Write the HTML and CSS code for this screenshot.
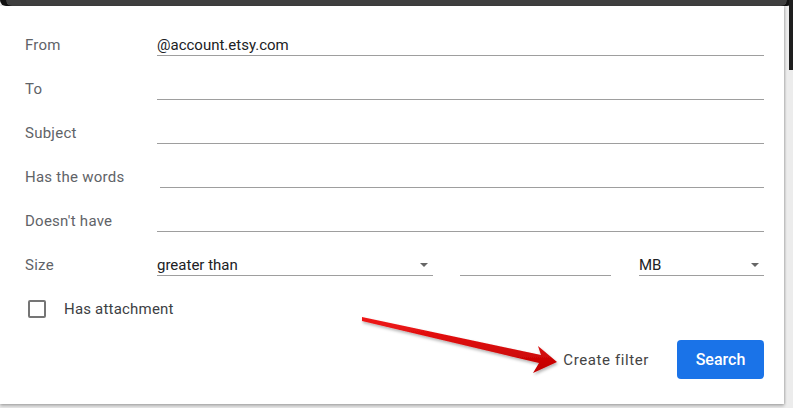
FILE: index.html
```html
<!DOCTYPE html>
<html lang="en">
<head>
    <meta charset="UTF-8">
    <meta name="viewport" content="width=device-width, initial-scale=1.0">
    <title>Search options</title>
    <link rel="stylesheet" href="styles.css">
</head>
<body>
    <!-- Top bar behind the dropdown -->
    <div class="topbar"></div>
    <div class="side-strip"></div>

    <!-- Search options panel -->
    <div class="panel">
        <div class="row">
            <label class="label" for="from">From</label>
            <input class="field" id="from" type="text" value="@account.etsy.com">
        </div>
        <div class="row">
            <label class="label" for="to">To</label>
            <input class="field" id="to" type="text">
        </div>
        <div class="row">
            <label class="label" for="subject">Subject</label>
            <input class="field" id="subject" type="text">
        </div>
        <div class="row">
            <label class="label" for="words">Has the words</label>
            <input class="field field-shift" id="words" type="text">
        </div>
        <div class="row">
            <label class="label" for="nothave">Doesn't have</label>
            <input class="field" id="nothave" type="text">
        </div>
        <div class="row">
            <span class="label">Size</span>
            <div class="select size-op">
                <span>greater than</span>
                <span class="caret"></span>
            </div>
            <input class="field size-num" type="text">
            <div class="select size-unit">
                <span>MB</span>
                <span class="caret"></span>
            </div>
        </div>
        <div class="row check-row">
            <span class="checkbox"></span>
            <span class="check-label">Has attachment</span>
        </div>
        <div class="actions">
            <span class="create">Create filter</span>
            <button class="search-btn">Search</button>
        </div>
    </div>

    <!-- Annotation arrow -->
    <svg class="arrow" width="793" height="408" viewBox="0 0 793 408">
        <defs>
            <linearGradient id="red" x1="0" y1="0" x2="0" y2="1">
                <stop offset="0" stop-color="#f01818"/>
                <stop offset="1" stop-color="#c00000"/>
            </linearGradient>
            <filter id="shadow" x="-10%" y="-30%" width="120%" height="160%">
                <feDropShadow dx="1" dy="2" stdDeviation="1.5" flood-color="#000" flood-opacity="0.3"/>
            </filter>
        </defs>
        <polygon filter="url(#shadow)" fill="url(#red)"
                 points="362,317 541,355 538,346 557,362 533,373 539,363 362,321"/>
    </svg>
</body>
</html>
```

FILE: styles.css
```css
/* Page */
body {
    margin: 0;
    width: 793px;
    height: 408px;
    overflow: hidden;
    background-color: #ececec;
    font-family: Roboto, "Noto Sans", Arial, sans-serif;
    position: relative;
}

.topbar {
    height: 6px;
    background-color: #3f3f3f;
    border-radius: 0 0 8px 8px;
    margin: 0 6px;
    box-shadow: -6px 0 0 #111, 6px 0 0 #111;
}

.side-strip {
    position: absolute;
    top: 0;
    right: 0;
    width: 4px;
    height: 70px;
    background-color: #1e1e1e;
}

/* Panel */
.panel {
    width: 764px;
    background-color: white;
    padding: 17px 20px 25px 0;
    box-shadow: 0 2px 3px rgba(0, 0, 0, 0.25), 1px 0 2px rgba(0, 0, 0, 0.15);
}

.row {
    display: flex;
    align-items: center;
    height: 44px;
    padding-left: 25px;
}

.label {
    width: 132px;
    flex-shrink: 0;
    font-size: 15px;
    letter-spacing: 0.25px;
    color: #5f6368;
}

.field {
    flex: 1;
    min-width: 0;
    height: 20px;
    padding: 0;
    border: none;
    border-bottom: 1px solid #9e9e9e;
    outline: none;
    font-family: inherit;
    font-size: 15px;
    color: #202124;
}

.field-shift {
    margin-left: 3px;
}

/* Size row */
.select {
    display: flex;
    align-items: center;
    justify-content: space-between;
    height: 20px;
    border-bottom: 1px solid #9e9e9e;
    font-size: 15px;
    color: #202124;
}

.size-op {
    width: 276px;
}

.size-num {
    flex: none;
    width: 151px;
    margin-left: 27px;
}

.size-unit {
    width: 125px;
    margin-left: 28px;
}

.caret {
    width: 0;
    height: 0;
    margin-right: 5px;
    border-left: 4.5px solid transparent;
    border-right: 4.5px solid transparent;
    border-top: 4.5px solid #666;
}

/* Checkbox */
.check-row {
    padding-left: 28px;
}

.checkbox {
    width: 14px;
    height: 14px;
    border: 2px solid #757575;
    border-radius: 2px;
}

.check-label {
    margin-left: 18px;
    font-size: 15px;
    letter-spacing: 0.2px;
    color: #3c4043;
}

/* Actions */
.actions {
    display: flex;
    justify-content: flex-end;
    align-items: center;
    margin-top: 9px;
}

.create {
    font-size: 15px;
    letter-spacing: 0.6px;
    color: #444;
    margin-right: 28px;
}

.search-btn {
    width: 87px;
    height: 39px;
    background-color: #1a73e8;
    color: white;
    border: none;
    border-radius: 4px;
    font-family: inherit;
    font-size: 16px;
    font-weight: 500;
}

.arrow {
    position: absolute;
    top: 0;
    left: 0;
}
```
